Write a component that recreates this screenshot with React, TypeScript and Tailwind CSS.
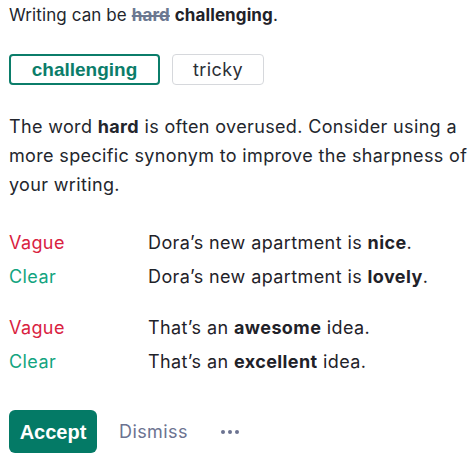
import React from "react";

const Row = ({ label, tone, children }: { label: string; tone: "vague" | "clear"; children: React.ReactNode }) => (
  <div className="flex h-[34px] items-center">
    <div className={`w-[139px] ${tone === "vague" ? "text-[#d9223f]" : "text-[#12a480]"}`}>{label}</div>
    <div className="text-[#1f2229]">{children}</div>
  </div>
);

export default function App() {
  return (
    <div className="w-[474px] h-[459px] bg-white pl-[9px] pr-[2px] pt-[1px] text-[18px] tracking-[0.4px] text-[#23262d]" style={{ fontFamily: "Inter, 'Liberation Sans', sans-serif" }}>
      <div className="leading-[28px] text-[17px] tracking-[0.1px]">
        Writing can be <span className="font-bold text-[#6b7891] line-through decoration-2">hard</span>{" "}
        <span className="font-bold text-[#1f2229]">challenging</span>.
      </div>
      <div className="mt-[25px] flex gap-[12px]">
        <button className="h-[31px] w-[151px] rounded-[4px] border-2 border-[#0b7d6a] text-[#0b7d6a] font-bold text-[19px] tracking-normal" style={{ fontFamily: "'Liberation Sans', Arial, sans-serif" }}>
          challenging
        </button>
        <button className="h-[31px] w-[92px] rounded-[4px] border border-[#d6d8dc] text-[#2c2f36] text-[18px]">
          tricky
        </button>
      </div>
      <p className="mt-[27px] leading-[29px] tracking-[0.35px] text-[#23262d]">
        The word <span className="font-bold">hard</span> is often overused. Consider using a more specific synonym to improve the sharpness of your writing.
      </p>
      <div className="mt-[26px]">
        <Row label="Vague" tone="vague">Dora’s new apartment is <b>nice</b>.</Row>
        <Row label="Clear" tone="clear">Dora’s new apartment is <b>lovely</b>.</Row>
      </div>
      <div className="mt-[17px]">
        <Row label="Vague" tone="vague">That’s an <b>awesome</b> idea.</Row>
        <Row label="Clear" tone="clear">That’s an <b>excellent</b> idea.</Row>
      </div>
      <div className="mt-[32px] flex items-center">
        <button className="h-[43px] w-[88px] rounded-[6px] bg-[#047a66] text-white font-bold text-[20px] tracking-normal" style={{ fontFamily: "'Liberation Sans', Arial, sans-serif" }}>
          Accept
        </button>
        <button className="ml-[22px] text-[#6c7391] text-[18px]">Dismiss</button>
        <div className="ml-[33px] flex gap-[3px]">
          <span className="w-[4px] h-[4px] rounded-full bg-[#6c7391]" />
          <span className="w-[4px] h-[4px] rounded-full bg-[#6c7391]" />
          <span className="w-[4px] h-[4px] rounded-full bg-[#6c7391]" />
        </div>
      </div>
    </div>
  );
}
